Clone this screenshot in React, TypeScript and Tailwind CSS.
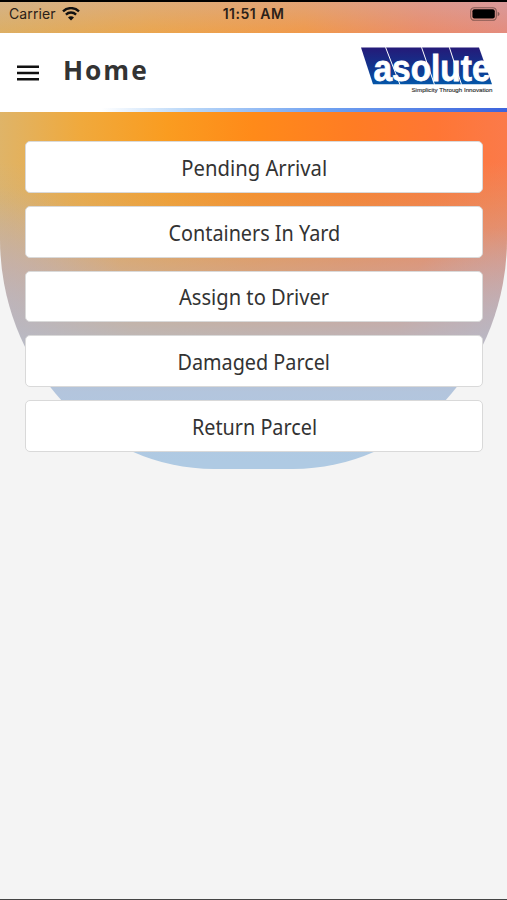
const menuItems = [
  { label: "Pending Arrival", width: "scale-x-[0.92]" },
  { label: "Containers In Yard", width: "scale-x-[0.9]" },
  { label: "Assign to Driver", width: "scale-x-[0.915]" },
  { label: "Damaged Parcel", width: "scale-x-[0.9]" },
  { label: "Return Parcel", width: "scale-x-[0.9]" },
];

function StatusBar() {
  return (
    <div className="relative h-[33px] border-t-2 border-black bg-[linear-gradient(180deg,rgba(200,178,190,0.42),rgba(220,160,120,0.2)),linear-gradient(90deg,#ddb25e_0%,#eea744_30%,#f59840_60%,#ee8865_83%,#e68780_100%)] font-['Inter',sans-serif] text-[#2a2018]">
      <div className="flex h-[24px] items-center justify-between pr-[7px] pl-[9px]">
        <div className="flex flex-1 items-center gap-[6px]">
          <span className="text-[14px] leading-none tracking-[0.1px]">Carrier</span>
          <svg width="18" height="14" viewBox="0 0 18 14" fill="none" stroke="#111" strokeWidth="2.3">
            <path d="M1 4.3a11.5 11.5 0 0 1 16 0" />
            <path d="M3.9 7.6a7.3 7.3 0 0 1 10.2 0" />
            <path d="M9 13.4 6 10.4a4.2 4.2 0 0 1 6 0z" fill="#111" stroke="none" />
          </svg>
        </div>
        <span className="-translate-x-px text-[14px] leading-none font-semibold tracking-[0.5px]">11:51 AM</span>
        <div className="flex flex-1 justify-end">
          <svg width="30" height="14" viewBox="0 0 30 14">
            <rect x="0.7" y="0.7" width="25.6" height="12.6" rx="3.6" fill="none" stroke="#3a2a28" strokeOpacity="0.55" strokeWidth="1.1" />
            <rect x="2.4" y="2.2" width="22.4" height="9.4" rx="2" fill="#000" />
            <path d="M27.7 4.8c2.4.8 2.4 3.6 0 4.4z" fill="#3a2a28" fillOpacity="0.55" />
          </svg>
        </div>
      </div>
    </div>
  );
}

function Logo() {
  return (
    <svg width="136" height="50" viewBox="0 0 136 50" className="overflow-visible">
      <defs>
        <linearGradient id="logoBlue" x1="0" y1="0" x2="0" y2="1">
          <stop offset="0" stopColor="#251a78" />
          <stop offset="0.5" stopColor="#12328c" />
          <stop offset="1" stopColor="#0456a8" />
        </linearGradient>
      </defs>
      <path d="M1 2.5h118L132 39.3H13z" fill="url(#logoBlue)" />
      <path d="M25.5 2.2 40 39.6M61.5 2.2l13 37.4M89.3 2.2l12.2 37.4" stroke="#fff" strokeWidth="1" />
      <text x="13.5" y="36" textLength="117" lengthAdjust="spacingAndGlyphs" fill="#fff" stroke="#fff" strokeWidth="0.8" className="font-['Liberation_Sans',sans-serif] text-[37px] font-bold">
        asolute
      </text>
      <text x="51.5" y="47.3" textLength="81" lengthAdjust="spacingAndGlyphs" fill="#333" stroke="#333" strokeWidth="0.15" className="font-['Liberation_Sans',sans-serif] text-[5.8px]">
        Simplicity Through Innovation
      </text>
    </svg>
  );
}

function Header() {
  return (
    <header className="flex h-[79px] flex-col bg-white">
      <div className="flex flex-1 items-center pr-[11px] pl-[17px]">
        <button type="button" aria-label="Menu" className="mr-[24px] pt-[5px]">
          <svg width="22" height="16" viewBox="0 0 22 16" stroke="#111" strokeWidth="2.4" className="block">
            <path d="M0 1.8h22M0 8h22M0 14.2h22" />
          </svg>
        </button>
        <h1 className="flex-1 font-['Open_Sans',sans-serif] text-[27px] leading-none font-bold tracking-[2px] text-[#333]">
          <span className="inline-block origin-left -translate-y-px scale-x-[0.975]">Home</span>
        </h1>
        <Logo />
      </div>
      <div className="h-[4.5px] bg-[linear-gradient(90deg,#fff_20%,#b9d7f8_37%,#6fa0f0_65%,#3c63dc_100%)]" />
    </header>
  );
}

export default function App() {
  return (
    <div className="flex h-[900px] w-[507px] flex-col overflow-hidden border-b border-[#444] bg-[#f4f4f4]">
      <StatusBar />
      <Header />
      <main>
        <div className="h-[357px] rounded-b-[214px_230px] bg-[linear-gradient(180deg,rgba(176,202,226,0)_0px,rgba(190,185,185,0)_50px,rgba(195,176,150,0.25)_90px,rgba(192,176,182,0.6)_155px,rgba(184,184,196,0.86)_216px,rgba(179,197,221,1)_280px,#afcae3_350px),radial-gradient(130px_125px_at_0px_200px,rgba(178,176,214,0.65),rgba(178,176,214,0)),radial-gradient(110px_100px_at_507px_215px,rgba(175,185,215,0.7),rgba(175,185,215,0)),linear-gradient(90deg,#dfb468_0%,#f0a93c_16%,#fa9c20_33%,#ff8a19_50%,#ff7c24_70%,#ff7634_86%,#fb7a4a_100%)] pt-[29px] pr-[24px] pl-[25px]">
          <div className="flex flex-col gap-[13px]">
            {menuItems.map((item) => (
              <button
                key={item.label}
                type="button"
                className="flex h-[51.8px] items-center justify-center rounded-[5px] border border-[#d9d9d9] bg-white font-['Noto_Sans',sans-serif] text-[22px] leading-none text-[#333]"
              >
                <span className={item.width}>{item.label}</span>
              </button>
            ))}
          </div>
        </div>
      </main>
    </div>
  );
}
